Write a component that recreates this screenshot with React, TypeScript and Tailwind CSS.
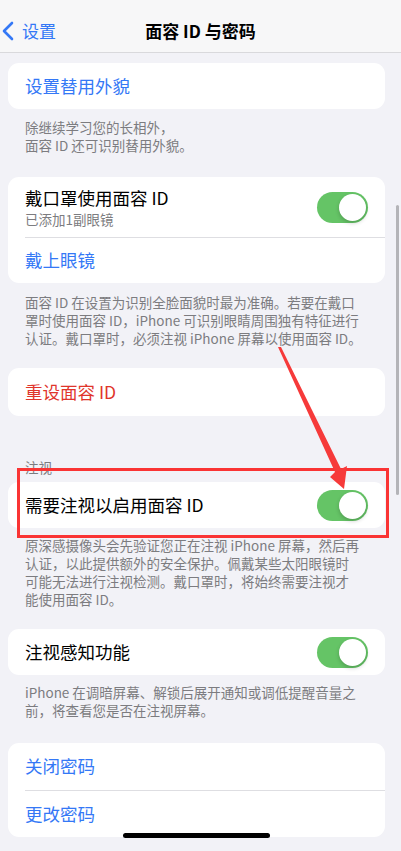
import React from 'react';

const font = { fontFamily: '"Noto Sans CJK SC", "Noto Sans", sans-serif' };

function Toggle() {
  return (
    <div className="w-[51px] h-[31px] rounded-full bg-[#65c466] flex items-center justify-end p-[2px] flex-shrink-0">
      <div className="w-[27px] h-[27px] rounded-full bg-white shadow-[0_2px_4px_rgba(0,0,0,0.2)]" />
    </div>
  );
}

function Footer({ lines, className = '' }: { lines: string[]; className?: string }) {
  return (
    <div className={`px-[17px] text-[13.5px] leading-[18px] text-[#7c7c80] ${className}`}>
      {lines.map((l) => (
        <div key={l} className="whitespace-nowrap">
          {l}
        </div>
      ))}
    </div>
  );
}

export default function App() {
  return (
    <div className="relative w-[401px] h-[851px] bg-[#f2f2f7] overflow-hidden" style={font}>
      <div className="h-[53px] bg-[#f7f7f8] border-b border-[#d9d9dc] relative flex items-end pb-[10px]">
        <div className="flex items-center text-[#3478f6] text-[17px] leading-[22px] pl-[2px]">
          <svg width="12" height="20" viewBox="0 0 12 20" className="mr-[8px]">
            <path d="M10 2 L2 10 L10 18" fill="none" stroke="#3478f6" strokeWidth="2.6" strokeLinecap="round" strokeLinejoin="round" />
          </svg>
          设置
        </div>
        <div className="absolute left-0 right-0 bottom-[10px] text-center text-[17px] leading-[22px] font-semibold text-black">
          面容 ID 与密码
        </div>
      </div>

      <div className="pl-[8px] pr-[16px]">
        <div className="mt-[10px] bg-white rounded-[11px] h-[46px] flex items-center px-[17px] text-[17.5px] text-[#3478f6]">
          设置替用外貌
        </div>
        <Footer className="pt-[9px]" lines={['除继续学习您的长相外，', '面容 ID 还可识别替用外貌。']} />

        <div className="mt-[23px] bg-white rounded-[11px]">
          <div className="h-[60px] flex items-center justify-between pl-[17px] pr-[17px]">
            <div>
              <div className="text-[17.5px] leading-[22px] text-black">戴口罩使用面容 ID</div>
              <div className="text-[13.5px] leading-[16px] mt-[2px] text-[#7c7c80]">已添加1副眼镜</div>
            </div>
            <Toggle />
          </div>
          <div className="ml-[17px] h-px bg-[#dedee2]" />
          <div className="h-[45px] flex items-center px-[17px] text-[17.5px] text-[#3478f6]">戴上眼镜</div>
        </div>
        <Footer
          className="pt-[10px]"
          lines={[
            '面容 ID 在设置为识别全脸面貌时最为准确。若要在戴口',
            '罩时使用面容 ID，iPhone 可识别眼睛周围独有特征进行',
            '认证。戴口罩时，必须注视 iPhone 屏幕以使用面容 ID。',
          ]}
        />

        <div className="mt-[21px] bg-white rounded-[11px] h-[48px] flex items-center px-[17px] text-[17.5px] text-[#e0352b]">
          重设面容 ID
        </div>

        <div className="mt-[42px] px-[17px] text-[13.5px] leading-[18px] text-[#7c7c80]">注视</div>
        <div className="relative mt-[6px]">
          <div className="bg-white rounded-[11px] h-[46px] flex items-center justify-between px-[17px]">
            <span className="text-[17.5px] text-black">需要注视以启用面容 ID</span>
            <Toggle />
          </div>
          <div className="absolute left-[9px] -right-[4px] -top-[14px] -bottom-[10px] border-[3px] border-[#fa3434]" />
        </div>
        <Footer
          className="pt-[8px]"
          lines={[
            '原深感摄像头会先验证您正在注视 iPhone 屏幕，然后再',
            '认证，以此提供额外的安全保护。佩戴某些太阳眼镜时',
            '可能无法进行注视检测。戴口罩时，将始终需要注视才',
            '能使用面容 ID。',
          ]}
        />

        <div className="mt-[21px] bg-white rounded-[11px] h-[46px] flex items-center justify-between px-[17px]">
          <span className="text-[17.5px] text-black">注视感知功能</span>
          <Toggle />
        </div>
        <Footer
          className="pt-[8px]"
          lines={['iPhone 在调暗屏幕、解锁后展开通知或调低提醒音量之', '前，将查看您是否在注视屏幕。']}
        />

        <div className="mt-[24px] bg-white rounded-[11px]">
          <div className="h-[47px] flex items-center px-[17px] text-[17.5px] text-[#3478f6]">关闭密码</div>
          <div className="ml-[17px] h-px bg-[#dedee2]" />
          <div className="h-[46px] flex items-center px-[17px] text-[17.5px] text-[#3478f6]">更改密码</div>
        </div>
      </div>

      <div className="absolute left-[396px] top-[205px] w-[3px] h-[290px] rounded-full bg-[#b4b4b8]" />
      <div className="absolute left-[123px] top-[833px] w-[147px] h-[5px] rounded-full bg-black" />

      <svg className="absolute left-0 top-0 pointer-events-none" width="401" height="851">
        <polygon points="278,347 281,347 341,469 347,466 344,489 330,477 335,472" fill="#f63a3a" />
      </svg>
    </div>
  );
}
